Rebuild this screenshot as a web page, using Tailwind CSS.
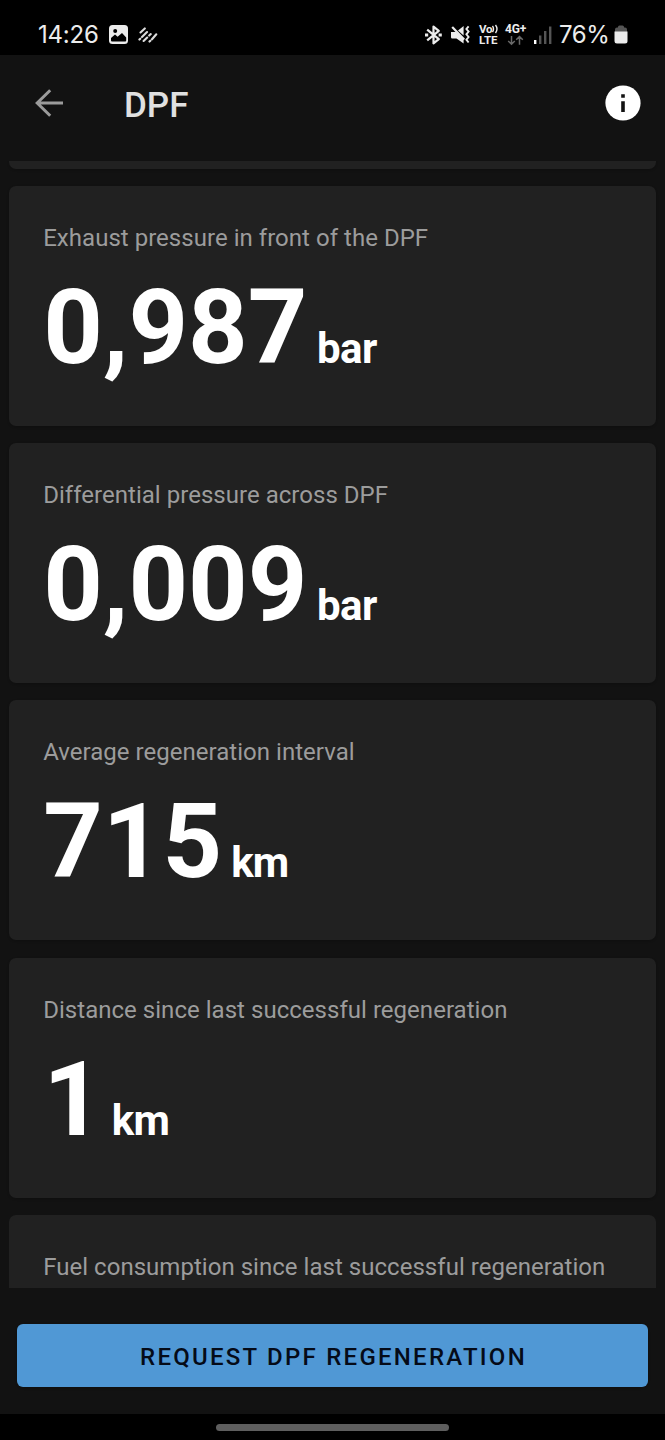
<!DOCTYPE html>
<html lang="en">
  <head>
    <meta charset="UTF-8" />
    <meta name="viewport" content="width=device-width, initial-scale=1.0" />
    <title>DPF</title>

    <!-- Tailwind CSS for styling -->
    <script src="https://cdn.jsdelivr.net/npm/@tailwindcss/browser@4"></script>
  </head>
  <body
    class="flex flex-col h-[1440px] w-[665px] overflow-hidden bg-[#121212] font-['Roboto',sans-serif] text-white"
  >
    <!-- Status bar -->
    <div
      class="flex items-center h-[54.5px] shrink-0 bg-black pt-[15px] pl-[38px] pr-[37px] font-['Inter',sans-serif] text-[#ececec]"
    >
      <span class="w-[71px] text-[24px] leading-[40px] tracking-[-0.2px]">14:26</span>
      <!-- Picture notification -->
      <svg class="w-[19px] h-[19px]" viewBox="0 0 19 19">
        <rect width="19" height="19" rx="3.5" fill="#ececec" />
        <circle cx="6.2" cy="6" r="2" fill="#000" />
        <path d="M2 15.5v-2.5l4-3.6 2.6 2.4L13 8l4.2 4.5v3q0 1-1 1H3q-1 0-1-1z" fill="#000" />
      </svg>
      <!-- Diagonal strokes notification -->
      <svg
        class="w-[20px] h-[16px] ml-[10px]"
        viewBox="0 0 20 16"
        fill="none"
        stroke="#dcdcdc"
        stroke-width="2.1"
        stroke-linecap="round"
      >
        <path d="M2.5 5.5 6.8 1.4M1.4 12.6l.9-.9M4 9.9l5-4.8M5.6 14l3.6-3.5M11.2 8.6l1.6-1.5M11.5 14.6l.9-.9M14 12.3l4.3-5" />
      </svg>

      <div class="flex items-center ml-auto">
        <!-- Bluetooth -->
        <svg class="w-[17px] h-[20px]" viewBox="0 0 17 20" fill="none" stroke="#ececec" stroke-width="2.2">
          <path d="M2.2 4.6 13.8 14.2 8.5 18.4V1.6L13.8 5.8 2.2 15.4" stroke-linejoin="round" />
          <path d="M0 10h3.2M13.6 10h3.2" stroke-width="2.8" />
        </svg>
        <!-- Muted, vibrate -->
        <svg class="w-[19px] h-[20px] ml-[9px]" viewBox="0 0 19 20" fill="none">
          <path d="M0 7h5L12.6 14v4.5L5.5 13.5H1.2Q0 13.5 0 12.3zM7 5.4 12.6 1v9.6z" fill="#ececec" />
          <path d="M1.2 2 13.2 14.4" stroke="#ececec" stroke-width="2.2" />
          <path d="M17.6 1.4 15.4 4l2.2 2.6-2.2 2.7 2.2 2.7-2.2 2.7 2.2 2.8" stroke="#ececec" stroke-width="1.9" />
        </svg>
        <div class="ml-[9px] w-[21px] font-['Roboto',sans-serif] text-[11.5px] leading-[11px] font-bold">
          <div class="flex items-center">
            <span class="tracking-[-0.3px]">Vo</span>
            <svg class="w-[7px] h-[10px]" viewBox="0 0 7 10" fill="none" stroke="#ececec" stroke-width="1.4">
              <path d="M.5 2q2 3 0 6M3.500 1q3 4 0 8" />
            </svg>
          </div>
          <div>LTE</div>
        </div>
        <div class="ml-[5px] w-[23px]">
          <div class="font-['Roboto',sans-serif] text-[12px] leading-[11px] font-bold tracking-[-0.2px]">4G+</div>
          <svg class="w-[22px] h-[11px]" viewBox="0 0 22 11" fill="none" stroke="#686868" stroke-width="1.5">
            <path d="M6.5 1v8M3.2 6l3.3 3.2L9.8 6M14.5 9.8V2M11.2 4.8l3.3-3.2 3.3 3.2" />
          </svg>
        </div>
        <!-- Signal -->
        <svg class="w-[18px] h-[18px] ml-[6px]" viewBox="0 0 18 18">
          <rect x="0" y="14" width="2.4" height="4" fill="#fff" />
          <path d="M5 9.5h2.4V18H5zM10 5h2.4v13H10zM15 .5h2.4V18H15z" fill="#555" />
        </svg>
        <span class="ml-[7px] w-[55px] text-[24px] leading-[40px] tracking-[-0.4px]">76%</span>
        <!-- Battery -->
        <svg class="w-[14px] h-[19px]" viewBox="0 0 14 19">
          <path d="M1 7V4.5Q1 2.5 3 2.5h1V2q0-1.5 1.5-1.5h3Q10 .5 10 2v.5h1q2 0 2 2V7z" fill="#555" />
          <path d="M.5 6.5h13V16q0 2.5-2.5 2.5H3Q.5 18.5.5 16z" fill="#ececec" />
        </svg>
      </div>
    </div>

    <!-- App bar -->
    <header class="flex items-center h-[106px] shrink-0 pl-[35px] pr-[24px] pb-[9px]">
      <svg class="w-[28px] h-[28px]" viewBox="0 0 28 28" fill="none" stroke="#9b9b9b" stroke-width="3">
        <path d="M28 14H3M15.2 1.2 2.2 14l13 12.8" />
      </svg>
      <h1 class="ml-[61px] text-[35px] leading-[40px] font-medium text-[#e0e0e0] pt-[5px]">DPF</h1>
      <svg class="w-[36px] h-[36px] ml-auto" viewBox="0 0 36 36">
        <circle cx="18" cy="18" r="17.6" fill="#fff" />
        <path d="M16.2 9.3h3.6v3.5h-3.6zM16.2 16.3h3.6v10.6h-3.6z" fill="#121212" />
      </svg>
    </header>

    <!-- Readings -->
    <main class="flex flex-col gap-[17.3px] h-[1127.5px] shrink-0 overflow-hidden px-[8.7px]">
      <div class="h-[8px] shrink-0 rounded-b-[7px] bg-[#212121] shadow-sm"></div>

      <section class="h-[240px] shrink-0 rounded-[7px] bg-[#212121] shadow-sm px-[34.5px] pt-[38px]">
        <h2 class="text-[24px] leading-[28px] tracking-[0.03px] text-[#9c9c9c]">Exhaust pressure in front of the DPF</h2>
        <p class="mt-[24px] text-[104px] leading-[104px] font-bold">0,987<span class="ml-[9.5px] text-[42px] leading-none tracking-[-0.5px]">bar</span></p>
      </section>

      <section class="h-[240px] shrink-0 rounded-[7px] bg-[#212121] shadow-sm px-[34.5px] pt-[38px]">
        <h2 class="text-[24px] leading-[28px] tracking-[0.03px] text-[#9c9c9c]">Differential pressure across DPF</h2>
        <p class="mt-[24px] text-[104px] leading-[104px] font-bold">0,009<span class="ml-[9.5px] text-[42px] leading-none tracking-[-0.5px]">bar</span></p>
      </section>

      <section class="h-[240px] shrink-0 rounded-[7px] bg-[#212121] shadow-sm px-[34.5px] pt-[38px]">
        <h2 class="text-[24px] leading-[28px] tracking-[0.03px] text-[#9c9c9c]">Average regeneration interval</h2>
        <p class="mt-[24px] text-[104px] leading-[104px] font-bold">715<span class="ml-[9px] text-[42px] leading-none tracking-[-0.8px]">km</span></p>
      </section>

      <section class="h-[240px] shrink-0 rounded-[7px] bg-[#212121] shadow-sm px-[34.5px] pt-[38px]">
        <h2 class="text-[24px] leading-[28px] tracking-[0.03px] text-[#9c9c9c]">Distance since last successful regeneration</h2>
        <p class="mt-[24px] text-[104px] leading-[104px] font-bold">1<span class="ml-[9px] text-[42px] leading-none tracking-[-0.8px]">km</span></p>
      </section>

      <section class="h-[240px] shrink-0 rounded-[7px] bg-[#212121] px-[34.5px] pt-[38px]">
        <h2 class="text-[24px] leading-[28px] tracking-[0.03px] text-[#9c9c9c]">Fuel consumption since last successful regeneration</h2>
      </section>
    </main>

    <!-- Action -->
    <div class="h-[126px] shrink-0 px-[17px] pt-[36px]">
      <button
        class="w-full h-[63px] rounded-[6px] bg-[#5098d5] shadow-sm text-[24px] leading-[28px] font-medium tracking-[2.25px] text-[#050b18] pt-[2px] pl-[2px]"
      >
        REQUEST DPF REGENERATION
      </button>
    </div>

    <!-- Gesture bar -->
    <div class="flex-1 bg-black pt-[10px]">
      <div class="mx-auto h-[7px] w-[233px] rounded-full bg-[#5e5e5e]"></div>
    </div>
  </body>
</html>
